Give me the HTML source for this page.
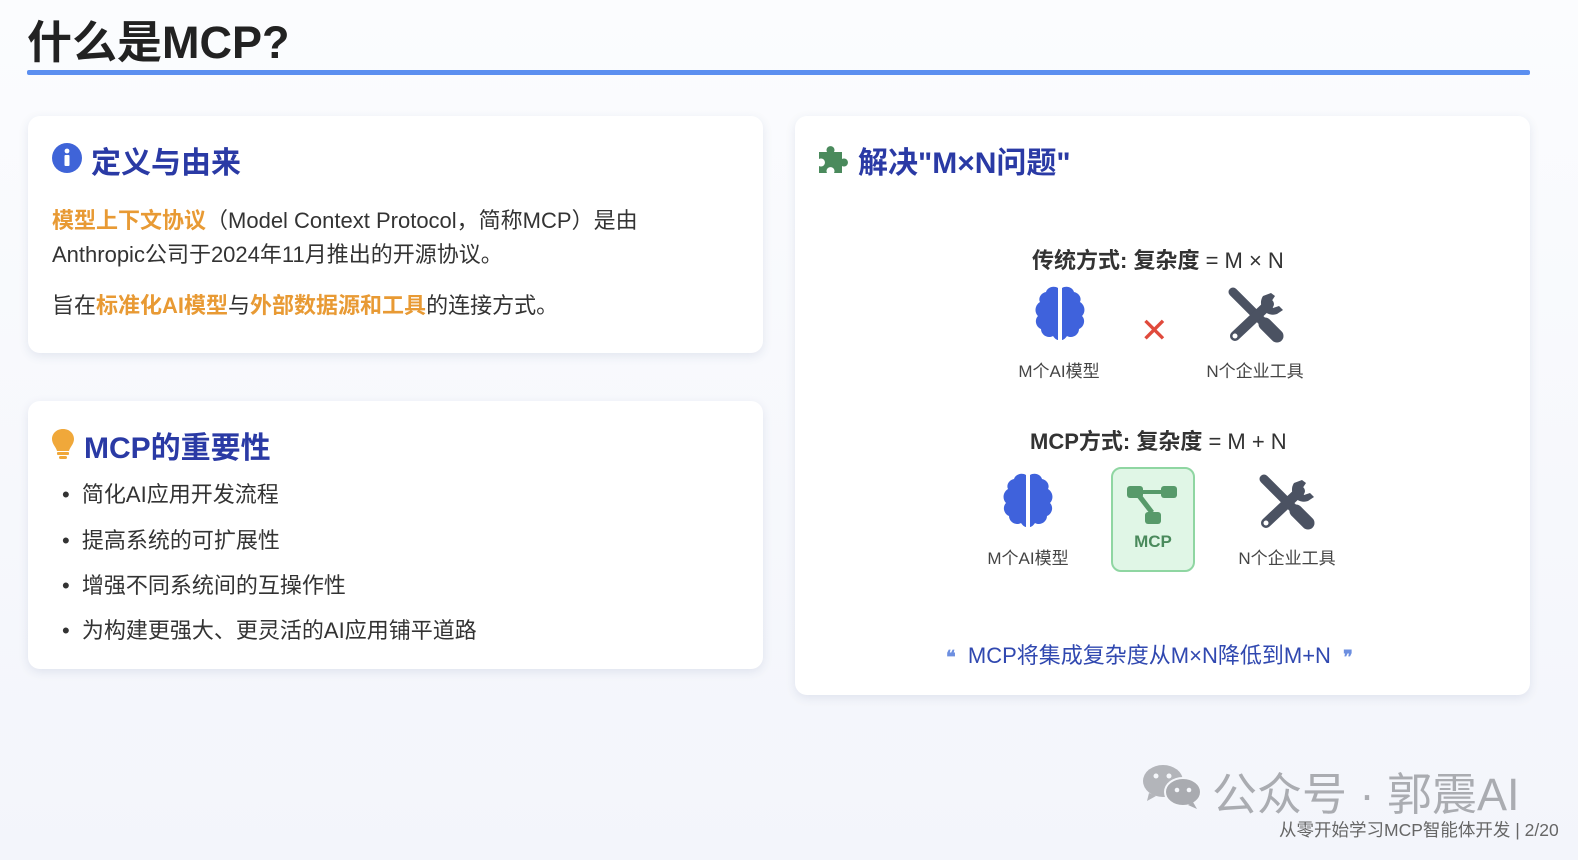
<!DOCTYPE html>
<html><head><meta charset="utf-8"><style>
*{margin:0;padding:0;box-sizing:border-box}
body{width:1578px;height:860px;overflow:hidden;background:linear-gradient(180deg,#fbfcfe 0%,#f3f5fb 100%);font-family:"Liberation Sans","Noto Sans CJK SC",sans-serif;position:relative;color:#333}
.a{position:absolute;white-space:nowrap}
.card{position:absolute;background:#fff;border-radius:12px;box-shadow:0 3px 10px rgba(40,60,120,.10)}
.h{font-weight:bold;color:#2a3aa5;font-size:30px}
.t{font-size:22px;color:#333}
.o{color:#e89a34;font-weight:bold}
.lbl{font-size:17px;color:#444;text-align:center;width:130px}
</style></head><body>
<div class="a" style="left:27px;top:6px;font-size:45px;font-weight:bold;color:#222">什么是MCP?</div>
<div class="a" style="left:27px;top:70px;width:1503px;height:5px;background:#5b8ff0;border-radius:2px"></div>

<div class="card" style="left:28px;top:116px;width:735px;height:237px"></div>
<svg class="a" style="left:51px;top:142px" width="32" height="32" viewBox="0 0 32 32"><circle cx="16" cy="16" r="15" fill="#3f64d8"/><circle cx="16" cy="9" r="2.4" fill="#fff"/><rect x="13.5" y="13" width="5" height="11" rx="1" fill="#fff"/></svg>
<div class="a h" style="left:91px;top:138px">定义与由来</div>
<div class="a t" style="left:52px;top:203px"><span class="o">模型上下文协议</span>（Model Context Protocol，简称MCP）是由</div>
<div class="a t" style="left:52px;top:237px">Anthropic公司于2024年11月推出的开源协议。</div>
<div class="a t" style="left:52px;top:288px">旨在<span class="o">标准化AI模型</span>与<span class="o">外部数据源和工具</span>的连接方式。</div>

<div class="card" style="left:28px;top:401px;width:735px;height:268px"></div>
<svg class="a" style="left:51px;top:428px" width="24" height="32" viewBox="0 0 24 32"><path d="M12 1C5 1 1 6 1 11c0 5 4 8 5 12h12c1-4 5-7 5-12C23 6 19 1 12 1z" fill="#f0a83a"/><rect x="6" y="24" width="12" height="3" rx="1" fill="#f0a83a"/><rect x="8" y="28" width="8" height="3" rx="1.5" fill="#f0a83a"/></svg>
<div class="a h" style="left:84px;top:423px">MCP的重要性</div>
<div class="a t" style="left:62px;top:477px">•&nbsp;&nbsp;简化AI应用开发流程</div>
<div class="a t" style="left:62px;top:523px">•&nbsp;&nbsp;提高系统的可扩展性</div>
<div class="a t" style="left:62px;top:568px">•&nbsp;&nbsp;增强不同系统间的互操作性</div>
<div class="a t" style="left:62px;top:613px">•&nbsp;&nbsp;为构建更强大、更灵活的AI应用铺平道路</div>

<div class="card" style="left:795px;top:116px;width:735px;height:579px"></div>
<svg class="a" style="left:818px;top:144px" width="32" height="30" viewBox="0 0 32 30"><path d="M1 8h8a4 4 0 1 1 7 0h8v7a4 4 0 1 1 0 7v7h-8a4 4 0 1 0-7 0H1v-7a4 4 0 1 0 0-7z" fill="#4a8a5c"/></svg>
<div class="a h" style="left:858px;top:138px">解决"M×N问题"</div>

<div class="a" style="left:1032px;top:243px;font-size:22px;color:#333;font-weight:bold">传统方式: 复杂度 <span style="font-weight:normal">= M × N</span></div>
<svg class="a" style="left:1030px;top:285px" width="60" height="60" viewBox="0 0 60 60"><g fill="#3f62dc"><path d="M28 3c-5-3-11 0-12 4-5 1-8 6-6 10-5 3-6 10-2 14-4 4-2 11 3 13 0 6 7 10 12 7 2 3 4 4 5 4z"/><path d="M32 3c5-3 11 0 12 4 5 1 8 6 6 10 5 3 6 10 2 14 4 4 2 11-3 13 0 6-7 10-12 7-2 3-4 4-5 4z"/></g></svg>
<div class="a" style="left:1140px;top:314px;font-size:34px;color:#e04a3c;line-height:1">✕</div>
<svg class="a" style="left:1225px;top:286px" width="62" height="60" viewBox="0 0 62 60"><g stroke="#4b5262" stroke-linecap="round" fill="none"><line x1="8" y1="6" x2="44" y2="42" stroke-width="9"/><line x1="40" y1="38" x2="52" y2="50" stroke-width="13"/><line x1="44" y1="18" x2="10" y2="50" stroke-width="10"/></g><path d="M38 10a12 12 0 0 0 14 18l6-4-4-4-6 2-2-6 4-6-4-3z" fill="#4b5262"/><circle cx="10" cy="50" r="2.5" fill="#fff"/></svg>
<div class="a lbl" style="left:994px;top:357px">M个AI模型</div>
<div class="a lbl" style="left:1190px;top:357px">N个企业工具</div>

<div class="a" style="left:1030px;top:424px;font-size:22px;color:#333;font-weight:bold">MCP方式: 复杂度 <span style="font-weight:normal">= M + N</span></div>
<svg class="a" style="left:998px;top:472px" width="60" height="60" viewBox="0 0 60 60"><g fill="#3f62dc"><path d="M28 3c-5-3-11 0-12 4-5 1-8 6-6 10-5 3-6 10-2 14-4 4-2 11 3 13 0 6 7 10 12 7 2 3 4 4 5 4z"/><path d="M32 3c5-3 11 0 12 4 5 1 8 6 6 10 5 3 6 10 2 14 4 4 2 11-3 13 0 6-7 10-12 7-2 3-4 4-5 4z"/></g></svg>
<div class="a" style="left:1111px;top:467px;width:84px;height:105px;background:#e0f6e6;border:2px solid #8fd6a2;border-radius:10px"></div>
<svg class="a" style="left:1127px;top:484px" width="52" height="42" viewBox="0 0 52 42"><g fill="#579a6a"><rect x="0" y="2" width="16" height="12" rx="3"/><rect x="34" y="2" width="16" height="12" rx="3"/><rect x="18" y="28" width="16" height="12" rx="3"/><rect x="14" y="6" width="22" height="4"/><path d="M9 12l14 18 4-3-13-17z"/></g></svg>
<div class="a" style="left:1111px;top:532px;width:84px;text-align:center;font-size:17px;font-weight:bold;color:#4a8a5c">MCP</div>
<svg class="a" style="left:1256px;top:473px" width="62" height="60" viewBox="0 0 62 60"><g stroke="#4b5262" stroke-linecap="round" fill="none"><line x1="8" y1="6" x2="44" y2="42" stroke-width="9"/><line x1="40" y1="38" x2="52" y2="50" stroke-width="13"/><line x1="44" y1="18" x2="10" y2="50" stroke-width="10"/></g><path d="M38 10a12 12 0 0 0 14 18l6-4-4-4-6 2-2-6 4-6-4-3z" fill="#4b5262"/><circle cx="10" cy="50" r="2.5" fill="#fff"/></svg>
<div class="a lbl" style="left:963px;top:544px">M个AI模型</div>
<div class="a lbl" style="left:1222px;top:544px">N个企业工具</div>

<div class="a" style="left:946px;top:638px;font-size:22px;color:#3048b0"><span style="color:#6d8fe0;font-size:18px;font-weight:bold">❝</span>&nbsp; MCP将集成复杂度从M×N降低到M+N &nbsp;<span style="color:#6d8fe0;font-size:18px;font-weight:bold">❞</span></div>

<svg class="a" style="left:1141px;top:763px" width="62" height="48" viewBox="0 0 62 48"><ellipse cx="22" cy="18" rx="20" ry="16" fill="#b3b5ba"/><path d="M8 30l-2 8 9-5z" fill="#b3b5ba"/><ellipse cx="42" cy="29" rx="18" ry="14" fill="#a9abb0" stroke="#f5f7fb" stroke-width="2"/><path d="M52 39l4 7-9-4z" fill="#a9abb0"/><g fill="#f5f7fb"><circle cx="15" cy="13" r="2.5"/><circle cx="28" cy="13" r="2.5"/><circle cx="36" cy="27" r="2.3"/><circle cx="48" cy="27" r="2.3"/></g></svg>
<div class="a" style="left:1212px;top:758px;font-size:45px;color:#aaacb1">公众号 · 郭震AI</div>
<div class="a" style="left:1279px;top:817px;font-size:17.5px;color:#666">从零开始学习MCP智能体开发 | 2/20</div>
</body></html>
